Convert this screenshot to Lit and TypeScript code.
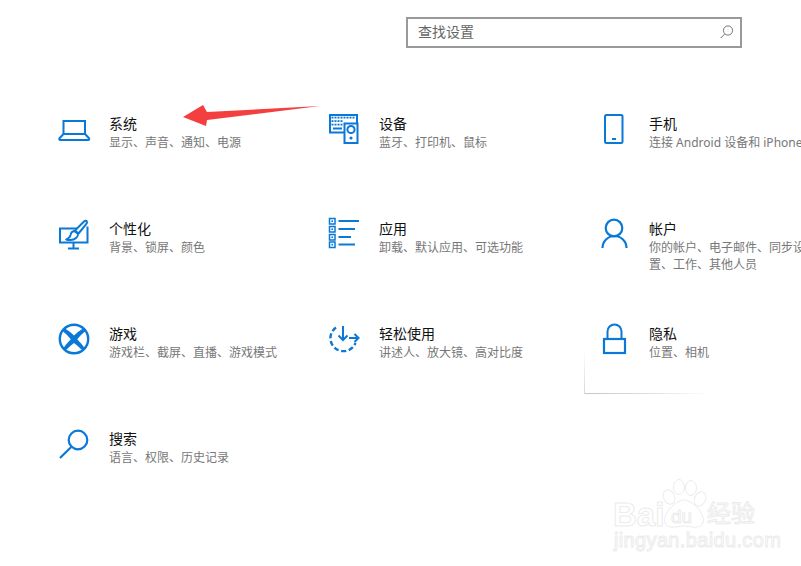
import { LitElement, html, css, svg } from "lit";
import { customElement } from "lit/decorators.js";

const B = "#0a78d7";

const laptop = svg`<path d="M7.5 26V13h21.5v13" fill="none" stroke=${B} stroke-width="2"/><path d="M7.5 26L3.5 30.2Q2.6 32 4.5 32H32Q33.8 32 33 30.2L29 26Z" fill="none" stroke=${B} stroke-width="2" stroke-linejoin="round"/>`;

const keyRows = [9.5, 13, 16.5];
const keyCols = [6.5, 9.5, 12.5, 15.5, 18.5, 21.5, 24.5, 27.5];
const devices = svg`<path d="M18 24.5H4V7h27v9" fill="none" stroke=${B} stroke-width="2"/>
  ${keyRows.map((y, r) => keyCols.filter((x) => r === 0 || x < 17).map((x) => svg`<rect x=${x - 1} y=${y - 0.8} width="2" height="1.8" fill=${B}/>`))}
  <rect x="7" y="19.5" width="9" height="2" fill=${B}/>
  <rect x="18.5" y="15.5" width="13" height="19.5" fill="#fff" stroke=${B} stroke-width="2"/>
  <circle cx="25" cy="21.5" r="3.6" fill="none" stroke=${B} stroke-width="2"/><circle cx="25" cy="30" r="1.6" fill=${B}/>`;

const phone = svg`<rect x="9" y="7" width="17.5" height="28" rx="1.5" fill="none" stroke=${B} stroke-width="2"/><rect x="16" y="30" width="4" height="2" fill=${B}/>`;

const personalize = svg`<path d="M21 15.5H4V29.5H31.5V13.5" fill="none" stroke=${B} stroke-width="2"/>
  <path d="M17.5 30v5M12 35.5h11" fill="none" stroke=${B} stroke-width="2"/>
  <path d="M28 8.5Q30 7 30.8 8.2Q31.5 9.5 30 11.3L22.5 20.5L19 17.5Z" fill="#fff" stroke=${B} stroke-width="2" stroke-linejoin="round"/>
  <path d="M18.3 18Q15 18.5 14.5 22Q14 25 10 26.5Q17 28 20 25Q22.5 22.5 21.8 20.8Z" fill="#fff" stroke=${B} stroke-width="1.8" stroke-linejoin="round"/>`;

const appRows: [number, number][] = [[8, 33], [16, 29], [24, 25], [31.5, 29]];
const apps = svg`${appRows.map(([y, e]) => svg`<rect x="3.5" y=${y - 2.5} width="5.5" height="5.5" fill="#fff" stroke=${B} stroke-width="1.5"/><rect x="5.4" y=${y - 0.6} width="1.6" height="1.6" fill=${B}/><path d="M12.5 ${y}H${e}" stroke=${B} stroke-width="2"/>`)}`;

const account = svg`<circle cx="18" cy="15" r="8.3" fill="none" stroke=${B} stroke-width="2.2"/><path d="M6.5 35a12 12 0 0 1 24 0" fill="none" stroke=${B} stroke-width="2.2"/>`;

const xbox = svg`<circle cx="18" cy="21" r="14.2" fill="none" stroke=${B} stroke-width="2.4"/>
  <path d="M18 17.6Q22 13.5 27 10.5L29.5 13Q24.5 17 21.2 21.2Q25.5 25.5 29 30.5L26.5 32.5Q22 28 18 25Q14 28 9.5 32.5L7 30.5Q10.5 25.5 14.8 21.2Q11.5 17 6.5 13L9 10.5Q14 13.5 18 17.6Z" fill=${B}/>`;

const ease = svg`<path d="M10 9.5A13 13 0 1 0 29.5 25" fill="none" stroke=${B} stroke-width="2.4" stroke-dasharray="5 2.6"/>
  <path d="M17 8V22M12.5 17.5L17 22L21.5 17.5M23 20H32.5M28.5 16L32.5 20L28.5 24" fill="none" stroke=${B} stroke-width="2"/>`;

const lock = svg`<rect x="8" y="21" width="21" height="14" fill="none" stroke=${B} stroke-width="2.2"/><path d="M11.5 20.5V13.5a7 7 0 0 1 14 0V20.5" fill="none" stroke=${B} stroke-width="2"/>`;

const search = svg`<circle cx="22" cy="17" r="9.3" fill="none" stroke=${B} stroke-width="2.2"/><path d="M4 35L15.2 24" fill="none" stroke=${B} stroke-width="2.2"/>`;

const tiles = [
  { icon: laptop, title: "系统", desc: "显示、声音、通知、电源" },
  { icon: devices, title: "设备", desc: "蓝牙、打印机、鼠标" },
  { icon: phone, title: "手机", desc: "连接 Android 设备和 iPhone" },
  { icon: personalize, title: "个性化", desc: "背景、锁屏、颜色" },
  { icon: apps, title: "应用", desc: "卸载、默认应用、可选功能" },
  { icon: account, title: "帐户", desc: "你的帐户、电子邮件、同步设\n置、工作、其他人员" },
  { icon: xbox, title: "游戏", desc: "游戏栏、截屏、直播、游戏模式" },
  { icon: ease, title: "轻松使用", desc: "讲述人、放大镜、高对比度" },
  { icon: lock, title: "隐私", desc: "位置、相机" },
  { icon: search, title: "搜索", desc: "语言、权限、历史记录" },
];

@customElement("app-root")
export class AppRoot extends LitElement {
  static styles = css`
    :host {
      display: block;
      font-family: "Noto Sans", "Noto Sans CJK SC", sans-serif;
    }
    .page {
      position: relative;
      width: 801px;
      height: 566px;
      overflow: hidden;
      background: #fff;
      padding: 17px 0 0 56px;
      box-sizing: border-box;
    }
    .search {
      box-sizing: border-box;
      width: 336px;
      height: 31px;
      margin-left: 350px;
      margin-bottom: 60px;
      border: 2px solid #999;
      display: flex;
      align-items: center;
      justify-content: space-between;
      padding: 0 4px 0 10px;
      font-size: 14px;
      color: #666;
    }
    .search span {
      line-height: 20px;
      padding-bottom: 1px;
    }
    .search svg {
      display: block;
    }
    .grid {
      display: grid;
      grid-template-columns: repeat(3, 270px);
      grid-auto-rows: 105px;
    }
    .tile {
      display: flex;
      gap: 13px;
      align-items: flex-start;
    }
    .tile svg {
      flex: none;
      display: block;
      width: 40px;
      height: 40px;
    }
    .text {
      padding-top: 6px;
    }
    .title {
      font-size: 14px;
      line-height: 20px;
      color: #111;
    }
    .desc {
      font-size: 12px;
      line-height: 17px;
      color: #777;
      white-space: pre;
    }
    .overlay {
      position: absolute;
      left: 0;
      top: 0;
      pointer-events: none;
    }
    .faint {
      position: absolute;
      left: 584px;
      top: 350px;
      width: 125px;
      height: 44px;
      box-sizing: border-box;
      border-bottom: 1px solid;
      border-image: linear-gradient(to right, #c4c4c4, #e4e4e4 60%, #fff) 1;
    }
    .faint::before {
      content: "";
      position: absolute;
      left: 0;
      top: 0;
      bottom: -1px;
      width: 1px;
      background: linear-gradient(to bottom, #fff, #d8d8d8);
    }
    .mark {
      position: absolute;
      color: #fff;
      -webkit-text-stroke: 1px #ececec;
      font-family: "Liberation Sans", "Noto Sans CJK SC", sans-serif;
      line-height: 1;
      white-space: nowrap;
    }
    .bai {
      left: 613px;
      top: 498px;
      font-size: 33px;
      font-weight: 700;
    }
    .du {
      left: 671px;
      top: 507px;
      font-size: 19px;
    }
    .jy {
      left: 707px;
      top: 502px;
      font-size: 24px;
    }
    .url {
      left: 614px;
      top: 530px;
      font-size: 20px;
      letter-spacing: 0.35px;
    }
  `;

  render() {
    return html`<div class="page">
      <div class="search">
        <span>查找设置</span>
        <svg width="20" height="20" viewBox="0 0 20 20">
          <circle cx="12" cy="7.5" r="4.6" fill="none" stroke="#777" stroke-width="1"/>
          <path d="M8.7 11L4.8 15" stroke="#777" stroke-width="1" fill="none"/>
        </svg>
      </div>
      <div class="grid">
        ${tiles.map(
          (t) => html`<div class="tile">
            <svg viewBox="0 0 40 40">${t.icon}</svg>
            <div class="text">
              <div class="title">${t.title}</div>
              <div class="desc">${t.desc}</div>
            </div>
          </div>`
        )}
      </div>
      <svg class="overlay" width="801" height="566" viewBox="0 0 801 566">
        <path d="M183 117L203 105L207 112L320 106L207 120L206 126Z" fill="#f33f3f"/>
        <g fill="#fff" stroke="#ececec" stroke-width="1">
          <ellipse cx="669" cy="497" rx="5.5" ry="7.5" transform="rotate(-25 669 497)"/>
          <ellipse cx="679" cy="487" rx="5.5" ry="7.5"/>
          <ellipse cx="691" cy="488" rx="5.5" ry="7.5"/>
          <ellipse cx="700" cy="499" rx="5.5" ry="7.5" transform="rotate(25 700 499)"/>
          <path d="M684 500C692 500 706 514 703 523C700 530 690 526 684 526C678 526 668 530 665 523C662 514 676 500 684 500Z"/>
        </g>
      </svg>
      <div class="faint"></div>
      <span class="mark bai">Bai</span>
      <span class="mark du">du</span>
      <span class="mark jy">经验</span>
      <span class="mark url">jingyan.baidu.com</span>
    </div>`;
  }
}
